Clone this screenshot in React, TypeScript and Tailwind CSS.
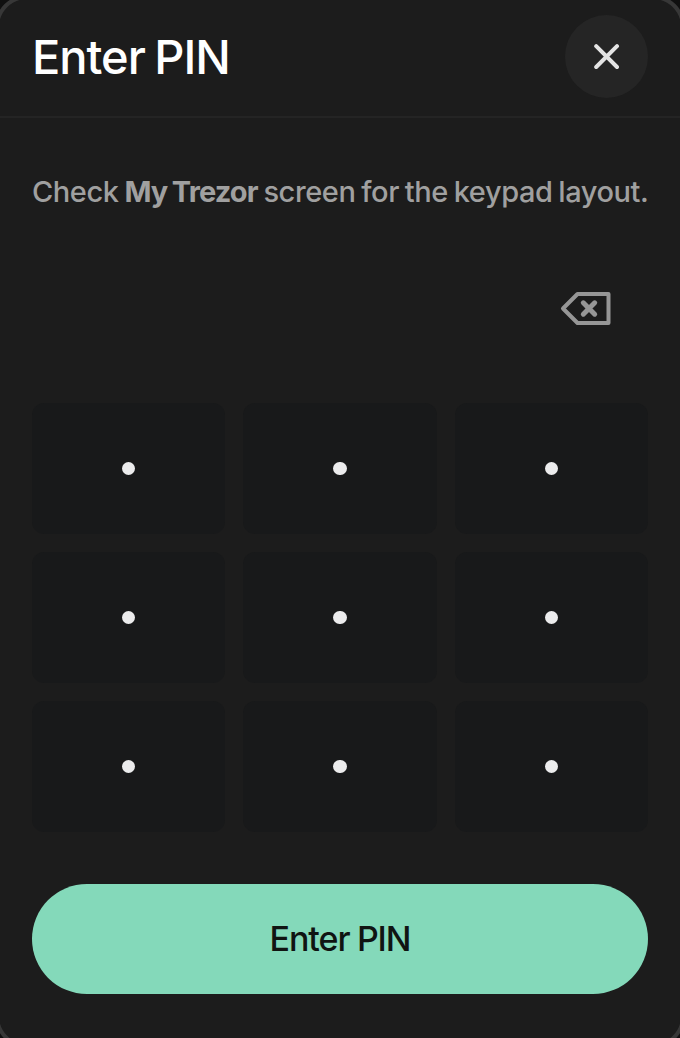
import React from "react";

export default function App() {
  return (
    <div className="h-[1038px] w-[680px] overflow-hidden bg-[#101010] font-['Inter','Liberation_Sans',sans-serif]">
      <main className="-ml-[5px] -mt-[5px] flex h-[1053px] w-[690px] flex-col overflow-hidden rounded-[32px] border-4 border-[#373737] bg-[#1c1c1c]">
        <header className="flex h-[119px] shrink-0 items-center justify-between border-b-2 border-[#242424] px-[33px] pb-0.5">
          <h1 className="whitespace-nowrap text-[47px] font-medium leading-none tracking-[-1.02px] text-white [word-spacing:-2px]">Enter PIN</h1>
          <button aria-label="Close" className="grid size-[83px] place-items-center rounded-full bg-[#252525]">
            <svg width="26" height="26" viewBox="0 0 26 26" fill="none" stroke="#e4e4e4" strokeWidth="4" strokeLinecap="round"><path d="M2.2 2.2 23 23M23 2.2 2.2 23" /></svg>
          </button>
        </header>
        <p className="mt-[54px] shrink-0 whitespace-nowrap px-[33px] text-[29px] font-[450] leading-[40px] tracking-[-0.42px] text-[#a0a0a0] [word-spacing:-1.5px]">
          Check <b className="font-bold tracking-[-0.9px]">My Trezor</b> screen for the keypad layout.
        </p>
        <div className="mt-[79px] flex shrink-0 justify-end pr-[69px]">
          <svg width="52" height="35" viewBox="0 0 52 35" fill="none" stroke="#969696" strokeWidth="4" strokeLinejoin="round"><path d="M17.5 3H48.5V32H17.5L3 17.5Z" /><path d="M23.3 11.8 34.7 23.2M34.7 11.8 23.3 23.2" strokeWidth="5" strokeLinecap="round" /></svg>
        </div>
        <div className="mx-[33px] mt-[76.5px] grid shrink-0 grid-cols-3 gap-x-[18px] gap-y-[17.5px]">
          {Array.from({ length: 9 }, (_, i) => (
            <button key={i} aria-label={`Key ${i + 1}`} className="grid h-[131.5px] place-items-center rounded-xl bg-[#18191a]">
              <span className="size-[13.3px] rounded-full bg-[#ececed]" />
            </button>
          ))}
        </div>
        <button className="mx-[33px] mt-[51.5px] h-[110px] shrink-0 rounded-full bg-[#84d9ba] text-[34px] font-medium tracking-[-1.1px] text-[#101412] [word-spacing:-0.5px]">Enter PIN</button>
      </main>
    </div>
  );
}
